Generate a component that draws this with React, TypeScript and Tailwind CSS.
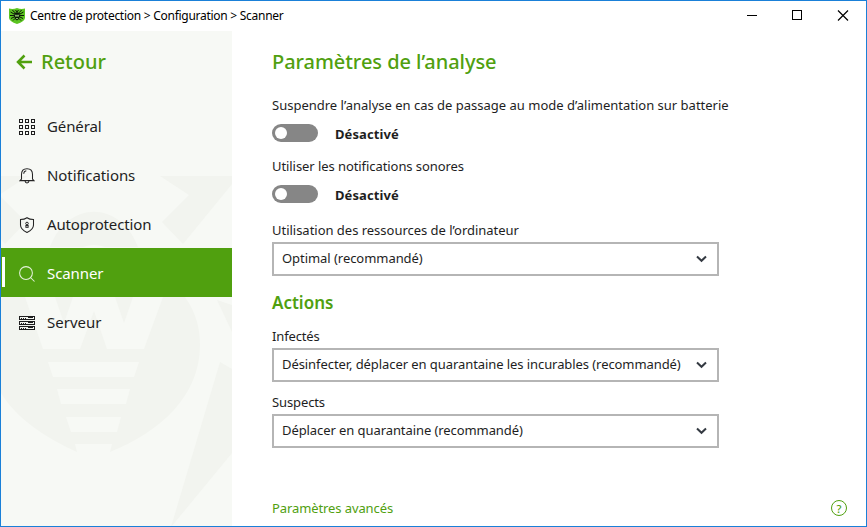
import type { ReactNode } from "react";

const font = "font-['Noto_Sans','Open_Sans',sans-serif]";

function Watermark() {
  return (
    <svg className="absolute left-0 top-0 h-full w-full" viewBox="1 31 231 495" fill="#f2f4ef">
      <path d="M28 176L-1 195L26 222L5 244L-44 184V176Z" />
      <path d="M160 176L189 195L162 222L183 244L232 184V176Z" />
      <path d="M50 247C68 200 120 200 138 247H105Q94 243 83 247Z" />
      <path d="M3 297C-8 316 -12 330 -12 345C-12 400 30 430 77 452L75 444H112L110 452C160 432 200 396 200 345C200 330 197 314 185 297Z" />
      <path d="M217 300L232 305V332ZM220 362L232 369V453L171 527Z" />
      <g fill="#f7f9f5">
        <path d="M25 297L43 349H80L94 311L107 349H144L163 297H133L124 323L115 297H73L64 323L55 297Z" />
        <path d="M48 362H139L134 377H53ZM57 389H130L126 404H61ZM66 417H121L117 432H71Z" />
      </g>
    </svg>
  );
}

function ShieldLogo() {
  return (
    <svg width="16" height="16" viewBox="0 0 16 16">
      <path d="M0 .5Q4 1.500 8 0Q12 1.500 16 .5V10Q15.500 13.500 8 16Q.5 13.500 0 10Z" fill="#5bc421" />
      <path d="M3.500 2l1 1.500 1.500 1M12.500 2l-1 1.500-1.500 1M1.500 4l3.500 2M14.500 4l-3.500 2M1 7.500h4M15 7.500h-4M2 10.500l3-1.500M14 10.500l-3-1.500M4 12.500l2-2M12 12.500l-2-2M6.500 2l1.500 2 1.500-2" stroke="#0b1608" strokeWidth="1" fill="none" />
      <path d="M5 5.500Q8 3 11 5.500V8.500Q10.500 11 8 12.500Q5.500 11 5 8.500Z" fill="#0b1608" />
      <path d="M6 6.500l1 2.200L8 6.800l1 1.900 1-2.200M7 10.500h2" stroke="#a7e982" strokeWidth=".8" fill="none" />
    </svg>
  );
}

function GridIcon() {
  return (
    <svg width="16" height="16" fill="none" stroke="#1e1e1e" shapeRendering="crispEdges">
      {[0.5, 6.5, 12.5].map((y) => [0.5, 6.5, 12.5].map((x) => <rect key={`${x}-${y}`} x={x} y={y} width="3" height="3" />))}
    </svg>
  );
}

function BellIcon() {
  return (
    <svg width="16" height="16" fill="none" stroke="#252525" strokeWidth="1.050">
      <path d="M2.500 11V6.500C2.500 3 4.500.7 8 .7S13.500 3 13.500 6.500V11L15 12.600H1ZM6 13C6.300 15.600 9.700 15.600 10 13M4.700 5.800Q4.900 3.200 7.300 2.800" />
    </svg>
  );
}

function ProtectIcon() {
  return (
    <svg width="16" height="16" fill="none" stroke="#252525" strokeWidth="1.050">
      <path d="M8 .7Q10.500 2.500 14.500 2.500V8Q14.500 12.500 8 15.400Q1.500 12.500 1.500 8V2.500Q5.500 2.500 8 .7Z" />
      <circle cx="8" cy="6.500" r="1.300" strokeWidth="1" />
      <path d="M6.400 8h3.200v2.800H6.400Z" fill="#252525" stroke="none" />
      <path d="M7.500 9h1v1h-1z" fill="#fff" stroke="none" />
    </svg>
  );
}

function SearchIcon() {
  return (
    <svg width="16" height="16" fill="none" stroke="#e5f2dc" strokeWidth="1.050">
      <circle cx="7" cy="7" r="6.400" />
      <path d="M11.500 11.500L15.500 15.500" />
    </svg>
  );
}

function ServerIcon() {
  return (
    <svg width="16" height="16" fill="none" stroke="#1e1e1e" shapeRendering="crispEdges">
      {[1, 6, 11].map((y) => (
        <g key={y}>
          <rect x=".5" y={y + 0.5} width="15" height="3" />
          <path d={`M2 ${y + 2.5}h1M4 ${y + 2.5}h1M6 ${y + 2.5}h1M9 ${y + 1.5}h5`} />
        </g>
      ))}
    </svg>
  );
}

function NavItem({ icon, label, track, active = false }: { icon: ReactNode; label: string; track: string; active?: boolean }) {
  return (
    <a className={`relative flex h-[49px] items-center pl-[18px] pt-[3px] ${active ? "bg-[#50a00f] text-white" : "text-[#1e1e1e]"}`}>
      {active && <span className="absolute left-px top-[9px] h-[30px] w-[3px] bg-white" />}
      {icon}
      <span className={`mb-[3px] ml-3 whitespace-nowrap text-[15px] leading-5 ${track}`}>{label}</span>
    </a>
  );
}

function Label({ text, track }: { text: string; track: string }) {
  return <div className={`h-5 whitespace-nowrap text-[13px] leading-5 ${track}`}>{text}</div>;
}

function Toggle() {
  return (
    <div className="flex h-[18px] items-center gap-[17px]">
      <span className="flex h-[18px] w-[46px] items-center rounded-full bg-[#868686] pl-[3px]">
        <span className="h-3 w-3 rounded-full bg-white" />
      </span>
      <span className="pt-[2px] text-[13px] font-bold leading-[18px] tracking-[0.1px]">Désactivé</span>
    </div>
  );
}

function Select({ text, track }: { text: string; track: string }) {
  return (
    <div className="flex h-[34px] w-[447px] items-center justify-between border-2 border-[#b5b5b5] pl-2 pr-[10px]">
      <span className={`mb-[2px] whitespace-nowrap text-[13px] leading-5 ${track}`}>{text}</span>
      <svg width="11" height="8" fill="none" stroke="#343a42" strokeWidth="2">
        <path d="M1 1.500L5.500 5.800L10 1.500" />
      </svg>
    </div>
  );
}

export default function App() {
  return (
    <div className={`flex h-[527px] w-[867px] flex-col overflow-hidden border border-[#1a80d8] bg-white text-[#1e1e1e] ${font}`}>
      <header className="flex h-[30px] shrink-0 items-center justify-between pl-2">
        <div className="flex items-center gap-[5px]">
          <ShieldLogo />
          <span className="whitespace-nowrap text-[12px] leading-4 tracking-[-0.27px] text-black">Centre de protection &gt; Configuration &gt; Scanner</span>
        </div>
        <svg width="120" height="30" fill="none" stroke="#000" className="shrink-0">
          <path d="M1 14.500h10M46.500 9.500h9v9h-9z" shapeRendering="crispEdges" />
          <path d="M92 9.500l10 10M102 9.500l-10 10" strokeWidth="1.200" />
        </svg>
      </header>
      <div className="flex min-h-0 flex-1">
        <nav className="relative w-[231px] shrink-0 bg-[#f7f9f5]">
          <Watermark />
          <div className="relative">
            <div className="flex h-[70px] items-start pl-[15px] pt-[17px] text-[#50a00f]">
              <svg width="16" height="28" fill="none" stroke="#50a00f" strokeWidth="2.500">
                <path d="M2 14H16M8.500 7.500L2 14L8.500 20.500" />
              </svg>
              <span className="ml-[9px] text-[20px] font-medium leading-7">Retour</span>
            </div>
            <NavItem icon={<GridIcon />} label="Général" track="tracking-[-0.1px]" />
            <NavItem icon={<BellIcon />} label="Notifications" track="tracking-[-0.08px]" />
            <NavItem icon={<ProtectIcon />} label="Autoprotection" track="tracking-[-0.14px]" />
            <NavItem icon={<SearchIcon />} label="Scanner" track="tracking-[-0.1px]" active />
            <NavItem icon={<ServerIcon />} label="Serveur" track="tracking-normal" />
          </div>
        </nav>
        <main className="flex flex-1 flex-col pl-10 pt-[17px]">
          <h1 className="h-7 whitespace-nowrap text-[20px] font-medium leading-7 tracking-[-0.05px] text-[#50a00f]">Paramètres de l’analyse</h1>
          <div className="mt-[19px]"><Label text="Suspendre l’analyse en cas de passage au mode d’alimentation sur batterie" track="tracking-normal" /></div>
          <div className="mt-[9px]"><Toggle /></div>
          <div className="mt-[14px]"><Label text="Utiliser les notifications sonores" track="tracking-[-0.07px]" /></div>
          <div className="mt-[9px]"><Toggle /></div>
          <div className="mt-[17px]"><Label text="Utilisation des ressources de l’ordinateur" track="tracking-[-0.02px]" /></div>
          <div className="mt-[2px]"><Select text="Optimal (recommandé)" track="tracking-[-0.05px]" /></div>
          <h2 className="mt-[15px] h-6 text-[17px] font-semibold leading-6 text-[#50a00f]">Actions</h2>
          <div className="mt-[11px]"><Label text="Infectés" track="tracking-[-0.15px]" /></div>
          <div className="mt-[2px]"><Select text="Désinfecter, déplacer en quarantaine les incurables (recommandé)" track="tracking-[-0.075px]" /></div>
          <div className="mt-[10px]"><Label text="Suspects" track="tracking-[-0.12px]" /></div>
          <div className="mt-[2px]"><Select text="Déplacer en quarantaine (recommandé)" track="tracking-[-0.08px]" /></div>
          <footer className="mt-[50px] flex h-5 items-center justify-between pr-[19px] text-[#50a00f]">
            <a className="text-[13px] leading-5 tracking-[-0.1px]">Paramètres avancés</a>
            <span className="flex h-4 w-4 items-center justify-center rounded-full border border-[#50a00f] text-[11px] font-medium leading-none">?</span>
          </footer>
        </main>
      </div>
    </div>
  );
}
